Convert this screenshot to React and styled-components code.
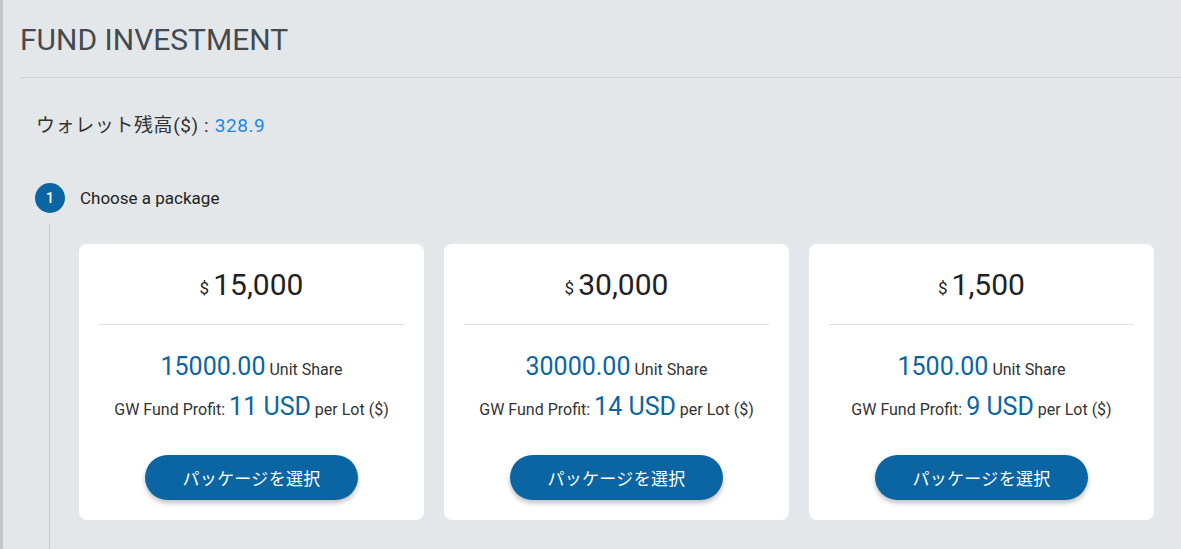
import React from 'react';
import styled, { createGlobalStyle } from 'styled-components';

const GlobalStyle = createGlobalStyle`
  body {
    margin: 0;
    background: #e3e7ea;
    font-family: Roboto, "Noto Sans CJK JP", sans-serif;
  }
`;

const Page = styled.div`
  min-height: 549px;
  box-sizing: border-box;
  border-left: 3px solid #c3c5c7;
  padding-left: 17px;
  overflow: hidden;
`;

const Header = styled.div`
  height: 77px;
  border-bottom: 1px solid #cfd3d6;
  display: flex;
  align-items: center;
`;

const Title = styled.h1`
  margin: 0;
  padding-top: 1px;
  font-size: 30px;
  font-weight: 400;
  color: #444a4f;
`;

const Wallet = styled.div`
  margin: 36px 0 0 16px;
  font-size: 19px;
  color: #333;
  line-height: 24px;
  letter-spacing: 0.6px;
  span {
    color: #2088e6;
    letter-spacing: 0.6px;
  }
`;

const Steps = styled.div`
  margin: 45px 0 0 15px;
`;

const StepHead = styled.div`
  display: flex;
  align-items: center;
  gap: 15px;
  font-size: 17px;
  color: #222;
`;

const StepNum = styled.div`
  width: 30px;
  height: 30px;
  border-radius: 50%;
  background: #0b65a3;
  color: #fff;
  font-size: 14px;
  font-weight: 500;
  display: flex;
  align-items: center;
  justify-content: center;
`;

const StepBody = styled.div`
  margin: 11px 0 0 14px;
  border-left: 1px solid #c7cbce;
  padding: 20px 0 40px 29px;
`;

const Cards = styled.div`
  display: flex;
  gap: 20px;
`;

const Card = styled.div`
  width: 345px;
  height: 276px;
  box-sizing: border-box;
  background: #fff;
  border-radius: 8px;
  padding: 0 20px;
  display: flex;
  flex-direction: column;
  align-items: center;
  text-align: center;
`;

const Price = styled.div`
  width: 100%;
  height: 80px;
  border-bottom: 1px solid #dde0e3;
  display: flex;
  align-items: center;
  justify-content: center;
  gap: 4px;
  color: #222;
  font-size: 30px;
  small {
    font-size: 17px;
    padding-top: 8px;
  }
`;

const Line = styled.div`
  margin-top: ${(p) => p.top}px;
  font-size: 16px;
  color: #333;
  line-height: 28px;
  b {
    font-weight: 400;
    font-size: 25px;
    color: #0b65a3;
  }
`;

const Button = styled.button`
  margin-top: 31px;
  width: 213px;
  height: 45px;
  border: none;
  border-radius: 23px;
  background: #0b65a3;
  color: #fff;
  font-family: Roboto, "Noto Sans CJK JP", sans-serif;
  font-size: 17px;
  font-weight: 400;
  letter-spacing: 0.3px;
  box-shadow: 0 3px 5px rgba(0, 0, 0, 0.25);
  cursor: pointer;
`;

const packages = [
  { price: '15,000', units: '15000.00', profit: '11' },
  { price: '30,000', units: '30000.00', profit: '14' },
  { price: '1,500', units: '1500.00', profit: '9' },
];

export default function App() {
  return (
    <>
      <GlobalStyle />
      <Page>
        <Header>
          <Title>FUND INVESTMENT</Title>
        </Header>
        <Wallet>
          ウォレット残高($) : <span>328.9</span>
        </Wallet>
        <Steps>
          <StepHead>
            <StepNum>1</StepNum>
            Choose a package
          </StepHead>
          <StepBody>
            <Cards>
              {packages.map((p) => (
                <Card key={p.price}>
                  <Price>
                    <small>$</small>
                    {p.price}
                  </Price>
                  <Line top={28}>
                    <b>{p.units}</b> Unit Share
                  </Line>
                  <Line top={9}>
                    GW Fund Profit: <b>{p.profit} USD</b> per Lot ($)
                  </Line>
                  <Button>パッケージを選択</Button>
                </Card>
              ))}
            </Cards>
          </StepBody>
        </Steps>
      </Page>
    </>
  );
}
